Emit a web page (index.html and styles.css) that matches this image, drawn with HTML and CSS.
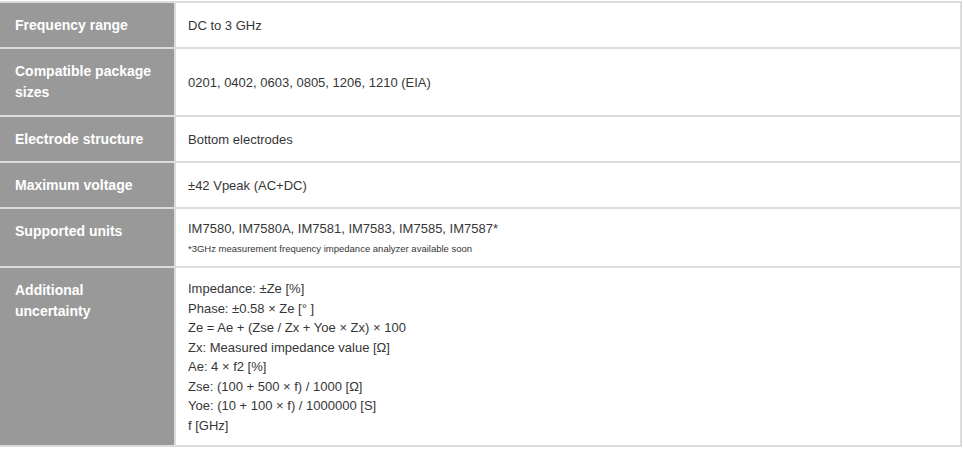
FILE: index.html
```html
<!DOCTYPE html>
<html>
<head>
<meta charset="utf-8">
<link rel="stylesheet" href="styles.css">
</head>
<body>
<table class="spec">
  <colgroup>
    <col class="c-head">
    <col class="c-val">
  </colgroup>
  <tr class="r1">
    <th>Frequency range</th>
    <td>DC to 3 GHz</td>
  </tr>
  <tr class="r2">
    <th>Compatible package sizes</th>
    <td>0201, 0402, 0603, 0805, 1206, 1210 (EIA)</td>
  </tr>
  <tr class="r3">
    <th>Electrode structure</th>
    <td>Bottom electrodes</td>
  </tr>
  <tr class="r4">
    <th>Maximum voltage</th>
    <td>±42 Vpeak (AC+DC)</td>
  </tr>
  <tr class="r5">
    <th>Supported units</th>
    <td>IM7580, IM7580A, IM7581, IM7583, IM7585, IM7587*<br><span class="note">*3GHz measurement frequency impedance analyzer available soon</span></td>
  </tr>
  <tr class="r6">
    <th>Additional uncertainty</th>
    <td class="multi">Impedance: ±Ze [%]<br>Phase: ±0.58 × Ze [° ]<br>Ze = Ae + (Zse / Zx + Yoe × Zx) × 100<br>Zx: Measured impedance value [Ω]<br>Ae: 4 × f2 [%]<br>Zse: (100 + 500 × f) / 1000 [Ω]<br>Yoe: (10 + 100 × f) / 1000000 [S]<br>f [GHz]</td>
  </tr>
</table>
</body>
</html>
```
FILE: styles.css
```css
html, body {
  margin: 0;
  padding: 0;
  background: #fff;
}
.spec {
  margin-top: 1px;
  width: 962px;
  table-layout: fixed;
  border-collapse: collapse;
  font-family: "Liberation Sans", Arial, sans-serif;
  border-top: 2px solid #dcdcdc;
  border-right: 2px solid #dcdcdc;
}
.c-head { width: 175px; }
.spec th {
  background: #999999;
  color: #fff;
  font-size: 14px;
  font-weight: bold;
  line-height: 21px;
  text-align: left;
  vertical-align: top;
  padding: 12px 12px 0 15px;
  border-bottom: 2px solid #dcdcdc;
  border-right: 2px solid #dcdcdc;
}
.spec td {
  color: #363636;
  font-size: 13px;
  line-height: 19.5px;
  vertical-align: middle;
  padding: 1px 12px 0 12px;
  border-bottom: 2px solid #dcdcdc;
}
.spec .note {
  font-size: 9.5px;
  line-height: 16px;
  display: inline-block;
}
.r1 th, .r1 td { height: 46px; box-sizing: border-box; }
.r2 th, .r2 td { height: 68px; box-sizing: border-box; }
.r3 th, .r3 td { height: 46px; box-sizing: border-box; }
.r4 th, .r4 td { height: 46px; box-sizing: border-box; }
.r5 th, .r5 td { height: 59px; box-sizing: border-box; }
.r6 th, .r6 td { height: 179px; box-sizing: border-box; }
```
